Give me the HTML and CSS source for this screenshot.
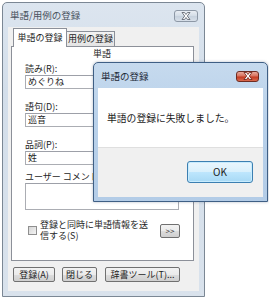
FILE: index.html
```html
<!DOCTYPE html>
<html lang="ja">
<head>
<meta charset="utf-8">
<link rel="stylesheet" href="styles.css">
</head>
<body>
<div class="desk">
  <div class="win main">
    <div class="titlebar">
      <span class="title">単語/用例の登録</span>
      <span class="close gray"><svg width="10" height="8" viewBox="0 0 10 8"><path d="M1 0.5h2.5L5 2.5 6.5 0.5H9L6.3 4 9 7.5H6.5L5 5.5 3.5 7.5H1L3.7 4Z" fill="#fff" stroke="#555b66" stroke-width="0.8"/></svg></span>
    </div>
    <div class="client">
      <div class="tabs">
        <div class="tab active">単語の登録</div>
        <div class="tab">用例の登録</div>
      </div>
      <div class="panel">
        <div class="group-label">単語</div>
        <div class="label first">読み(R):</div>
        <div class="input">めぐりね</div>
        <div class="label">語句(D):</div>
        <div class="input">巡音</div>
        <div class="label">品詞(P):</div>
        <div class="input">姓</div>
        <div class="label comment">ユーザー コメント</div>
        <div class="input area"></div>
        <div class="check-row">
          <span class="checkbox"></span>
          <span class="check-text">登録と同時に単語情報を送<br>信する(S)</span>
          <span class="btn small">&gt;&gt;</span>
        </div>
      </div>
      <div class="buttons">
        <span class="btn b1">登録(A)</span>
        <span class="btn b2">閉じる</span>
        <span class="btn b3">辞書ツール(T)...</span>
      </div>
    </div>
  </div>

  <div class="win msg">
    <div class="titlebar">
      <span class="title">単語の登録</span>
      <span class="close red"><svg width="10" height="8" viewBox="0 0 10 8"><path d="M1 0.5h2.5L5 2.5 6.5 0.5H9L6.3 4 9 7.5H6.5L5 5.5 3.5 7.5H1L3.7 4Z" fill="#fff" stroke="#6b1c10" stroke-width="0.8"/></svg></span>
    </div>
    <div class="msg-client">
      <div class="msg-body">単語の登録に失敗しました。</div>
      <div class="msg-foot">
        <span class="btn ok">OK</span>
      </div>
    </div>
  </div>
</div>
</body>
</html>
```

FILE: styles.css
```css
* { box-sizing: border-box; }

html, body {
  margin: 0;
  padding: 0;
  background: #ffffff;
}

body {
  font-family: "Noto Sans CJK JP", "Noto Sans", sans-serif;
  font-size: 9.5px;
  color: #1e1e1e;
}

.desk {
  position: relative;
  width: 269px;
  height: 300px;
  padding: 2px 0 0 2px;
}

.win {
  border: 1px solid #7b8794;
  border-radius: 5px 5px 0 0;
  display: flex;
  flex-direction: column;
}

.main {
  width: 203px;
  height: 295px;
  background: linear-gradient(#dce5ef, #d3deea 30%, #d9e2ec);
  padding: 0 5px 5px 5px;
}

.titlebar {
  display: flex;
  align-items: center;
  justify-content: space-between;
  flex: none;
}

.main .titlebar {
  height: 24px;
  padding-left: 2px;
}

.title {
  font-size: 9.5px;
  color: #4a535e;
  line-height: 10px;
}

.close {
  display: flex;
  align-items: center;
  justify-content: center;
  border-radius: 3px;
}

.close.gray {
  width: 24px;
  height: 12px;
  margin-right: 1px;
  margin-top: 2px;
  border: 1px solid #8d98a6;
  background: linear-gradient(#e9eef4, #d3dce6 50%, #c6d1dd 51%, #d8e0ea);
}

.client {
  flex: 1;
  background: #f0f0f0;
  padding: 0 5px 0 3px;
  display: flex;
  flex-direction: column;
}

.tabs {
  display: flex;
  align-items: flex-end;
  height: 19px;
  padding-left: 2px;
  flex: none;
}

.tab {
  border: 1px solid #8c9099;
  border-bottom: none;
  font-size: 9px;
  line-height: 10px;
  display: flex;
  align-items: center;
  justify-content: center;
}

.tab.active {
  width: 54px;
  height: 19px;
  margin-bottom: -1px;
  background: #ffffff;
  position: relative;
  z-index: 1;
  padding-bottom: 1px;
}

.tab:not(.active) {
  width: 48px;
  height: 15px;
  border-left: none;
  background: linear-gradient(#f3f3f3, #e4e4e4);
}

.panel {
  width: 183px;
  height: 215px;
  background: #ffffff;
  border: 1px solid #8c9099;
  padding: 2px 0 0 13px;
  display: flex;
  flex-direction: column;
  flex: none;
}

.group-label {
  margin-left: 68px;
  height: 10px;
  line-height: 10px;
  font-size: 9px;
}

.label {
  height: 10px;
  line-height: 10px;
  margin-top: 13px;
  font-size: 9px;
}

.label.first { margin-top: 5px; }
.label.comment { margin-top: 7px; }

.input {
  width: 154px;
  height: 14px;
  border: 1px solid #abadb3;
  border-top-color: #9da0a8;
  background: #fff;
  font-size: 9px;
  line-height: 12px;
  padding-left: 2px;
  margin-top: 1px;
  flex: none;
}

.input.area {
  height: 27px;
}

.check-row {
  margin-top: 10px;
  display: flex;
  align-items: center;
  padding-left: 3px;
}

.checkbox {
  width: 9px;
  height: 9px;
  border: 1px solid #8f8f8f;
  background: linear-gradient(135deg, #d6d6d6, #f4f4f4);
  flex: none;
}

.check-text {
  margin-left: 3px;
  font-size: 9px;
  line-height: 10.5px;
  width: 117px;
}

.btn {
  display: flex;
  align-items: center;
  justify-content: center;
  border: 1px solid #707070;
  border-radius: 2px;
  background: linear-gradient(#f2f2f2, #ebebeb 50%, #dddddd 51%, #cfcfcf);
  font-size: 9px;
  line-height: 10px;
  white-space: nowrap;
  flex: none;
}

.btn.small {
  width: 20px;
  height: 14px;
  margin-left: 3px;
  font-size: 8px;
  color: #333;
}

.buttons {
  display: flex;
  margin-top: 6px;
  padding-left: 2px;
}

.buttons .btn { height: 15px; }
.b1 { width: 42px; }
.b2 { width: 35px; margin-left: 7px; }
.b3 { width: 75px; margin-left: 8px; }

/* message box */
.msg {
  position: absolute;
  left: 93px;
  top: 62px;
  width: 175px;
  height: 140px;
  border-color: #3f5f85;
  background: linear-gradient(#c6daee, #b9d1ea 40%, #b3cce7);
  padding: 0 4px 4px 4px;
  box-shadow: 0 0 3px rgba(40, 60, 90, 0.35);
}

.msg .titlebar {
  height: 25px;
  padding-left: 3px;
}

.msg .title {
  color: #1e2a38;
  font-size: 9.5px;
}

.close.red {
  width: 23px;
  height: 11px;
  margin-right: 4px;
  margin-top: 1px;
  border: 1px solid #6f2c22;
  background: linear-gradient(#e9a99b, #d8735f 45%, #c43b22 55%, #d96a4f);
}

.msg-client {
  flex: 1;
  display: flex;
  flex-direction: column;
}

.msg-body {
  height: 59px;
  background: #ffffff;
  display: flex;
  align-items: center;
  padding-left: 9px;
  font-size: 9.8px;
  color: #1a1a1a;
}

.msg-foot {
  flex: 1;
  background: #f0f0f0;
  border-top: 1px solid #dfdfdf;
  display: flex;
  justify-content: flex-end;
  padding: 13px 10px 0 0;
}

.btn.ok {
  width: 66px;
  height: 22px;
  border-color: #3c7fb1;
  border-radius: 3px;
  background: linear-gradient(#eaf6fd, #d9f0fc 50%, #bee6fd 51%, #a7d9f5);
  font-size: 10px;
  color: #222;
  box-shadow: inset 0 0 0 1px #c8ecfe;
}
```
